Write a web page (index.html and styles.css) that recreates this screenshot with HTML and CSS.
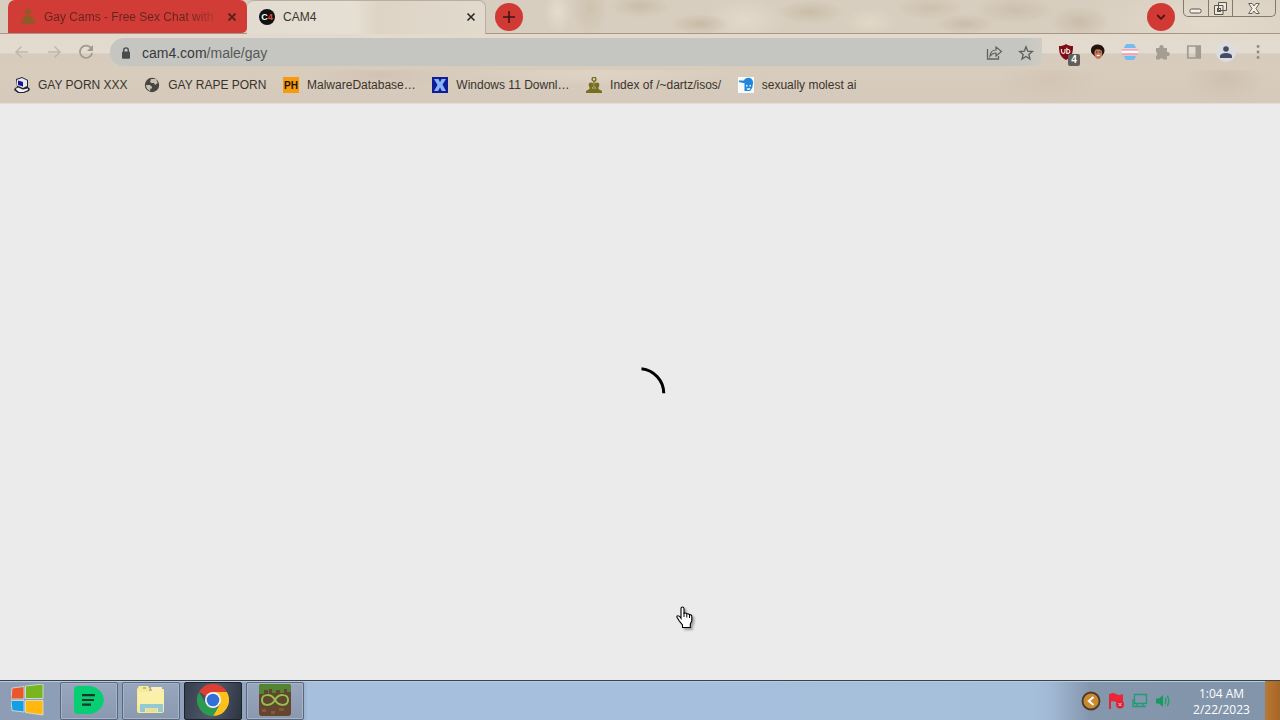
FILE: index.html
```html
<!DOCTYPE html>
<html lang="en">
<head>
  <meta charset="utf-8">
  <title>CAM4</title>
  <link rel="stylesheet" href="styles.css">
</head>
<body>
  <div class="desktop">
    <header class="browser">
      <div class="tabs">
        <div class="tab tab-red">
          <svg class="favicon" width="16" height="18" viewBox="0 0 16 18"><g fill="#8f5a28"><circle cx="8" cy="4" r="3"/><path d="M2 16V11l3-3h6l3 3v5z"/></g></svg>
          <span class="tab-title">Gay Cams - Free Sex Chat with</span>
          <svg class="close" width="10" height="10" viewBox="0 0 10 10"><path d="M1.5 1.5l7 7m0-7l-7 7" stroke="#5c2418" stroke-width="1.8"/></svg>
        </div>
        <div class="tab tab-active">
          <span class="cam-icon">C<b>4</b></span>
          <span class="tab-title">CAM4</span>
          <svg class="close" width="10" height="10" viewBox="0 0 10 10"><path d="M1.5 1.5l7 7m0-7l-7 7" stroke="#2a2825" stroke-width="1.6"/></svg>
        </div>
        <div class="round new-tab">
          <svg width="14" height="14" viewBox="0 0 14 14"><path d="M7 1v12M1 7h12" stroke="#3c1410" stroke-width="1.6"/></svg>
        </div>
        <div class="round tab-search">
          <svg width="10" height="8" viewBox="0 0 10 8"><path d="M1.2 2l3.8 3.8L8.8 2" fill="none" stroke="#4a1512" stroke-width="1.8"/></svg>
        </div>
        <div class="window-buttons">
          <span class="win-min"><svg width="13" height="6" viewBox="0 0 13 6"><rect x="1" y="1" width="11" height="4" rx="1.5" fill="#f4f0e8" stroke="#5b554b"/></svg></span>
          <span class="win-max"><svg width="13" height="13" viewBox="0 0 13 13"><path d="M4.5.5h8v8h-8zM.5 3.5H9v9H.5z" fill="#eee9df" stroke="#5b554b"/><rect x="3.5" y="6.5" width="3" height="3" fill="none" stroke="#5b554b"/></svg></span>
          <span class="win-close"><svg width="12" height="11" viewBox="0 0 12 11"><path d="M.7.5h3.5L6 3 7.800.5h3.500L8 5.500l3.300 5H7.800L6 8l-1.800 2.500H.7L4 5.500z" fill="#f4f0e8" stroke="#5b554b" stroke-width=".9"/></svg></span>
        </div>
      </div>

      <div class="toolbar">
        <div class="nav">
          <svg width="16" height="16" viewBox="0 0 16 16"><path d="M14 8H2m5.500-5.500L2 8l5.500 5.500" fill="none" stroke="#bfb8ac" stroke-width="1.5"/></svg>
          <svg width="16" height="16" viewBox="0 0 16 16"><path d="M2 8h12M8.500 2.500L14 8l-5.500 5.500" fill="none" stroke="#bfb8ac" stroke-width="1.5"/></svg>
          <svg width="16" height="16" viewBox="0 0 16 16"><path d="M13.400 4.500A6.200 6.200 0 1 0 14.200 9" fill="none" stroke="#a09a8e" stroke-width="1.7"/><path d="M15 1v6H9z" fill="#a09a8e"/></svg>
        </div>
        <div class="omnibox">
          <svg width="10" height="12" viewBox="0 0 10 12"><path d="M2.700 5V3.200a2.300 2.300 0 0 1 4.600 0V5" fill="none" stroke="#494b4c" stroke-width="1.4"/><rect x="1" y="4.500" width="8" height="7.200" rx="1" fill="#494b4c"/></svg>
          <span class="url">cam4.com<i>/male/gay</i></span>
          <svg class="share" width="17" height="16" viewBox="0 0 17 16"><path d="M1.500 4v10h11v-3" fill="none" stroke="#62635f" stroke-width="1.3"/><path d="M4 11c.5-4 2.500-6 6-6V2l5.500 4.500L10 11V8C7.500 8 5.800 8.800 4 11z" fill="none" stroke="#62635f" stroke-width="1.2"/></svg>
          <svg width="16" height="16" viewBox="0 0 16 16"><path d="M8 1.800l1.700 4.400 4.700.3-3.600 3 1.200 4.600L8 11.500l-4 2.600 1.200-4.600-3.600-3 4.700-.3z" fill="none" stroke="#5c5e60" stroke-width="1.3"/></svg>
        </div>
        <div class="extensions">
          <div class="ublock">
            <svg width="16" height="16" viewBox="0 0 16 16"><path d="M8 0c2 1.500 4 2 7 2 0 6-.5 10.500-7 14C1.500 12.500 1 8 1 2c3 0 5-.5 7-2z" fill="#800c16"/><path d="M3.500 5v2.500Q3.500 9.300 5.300 9.300T7 7.500V5M8.800 3.700v5.600h1.700a2 2 0 0 0 0-3.800H8.800" fill="none" stroke="#f4e5e2" stroke-width="1.2"/></svg>
            <span class="badge">4</span>
          </div>
          <svg width="16" height="16" viewBox="0 0 16 16"><path d="M1.500 9C0 5 2 1 7 .6c5-.5 9 4 7 8.400L12 12l-7 .5z" fill="#24130f"/><ellipse cx="8.300" cy="9.500" rx="3.900" ry="5.500" fill="#c27a5c"/><path d="M4.300 6.500q2-2.500 8 0L11 3H5z" fill="#24130f"/><path d="M6 8h1.500M9.300 8h1.500" stroke="#34150f"/><path d="M6.300 11q2 2.500 4.200-.3z" fill="#fff"/></svg>
          <svg width="16" height="16" viewBox="0 0 16 16"><path d="M4.500 0h7Q13 1 14 4H2q1-3 2.500-4z" fill="#72bcf0"/><path d="M0 5h16v1.800H0z" fill="#f4a4b8"/><path d="M0 6.800h16v2.400H0z" fill="#fff"/><path d="M0 9.200h16V11H0z" fill="#f2a2b8"/><path d="M2 12h12q-1 3-2.500 4h-7Q3 15 2 12z" fill="#72bcf0"/></svg>
          <svg width="16" height="16" viewBox="0 0 16 16"><path d="M2 4h3.500a2.200 2.200 0 1 1 4 0H13v4a2.100 2.100 0 1 1 0 4v3.500H9.500a2.200 2.200 0 0 0-4 0H2V12a2.200 2.200 0 0 0 0-4z" fill="#a39d94"/></svg>
          <svg width="16" height="16" viewBox="0 0 16 16"><path d="M1.800 2h12.400v12H1.800z" fill="none" stroke="#a19b92" stroke-width="1.7"/><path d="M9.500 2h5v12h-5z" fill="#a19b92"/></svg>
          <div class="profile">
            <svg width="12" height="12" viewBox="0 0 12 12"><circle cx="6" cy="3" r="2.800" fill="#444b68"/><path d="M0 12V9.800Q1 7 6 7t6 2.800V12z" fill="#444b68"/></svg>
          </div>
          <svg width="16" height="16" viewBox="0 0 16 16"><path d="M8 2.500h.1M8 8h.1M8 13.500h.1" stroke="#928b81" stroke-width="2.800" stroke-linecap="round"/></svg>
        </div>
      </div>

      <nav class="bookmarks">
        <div class="bookmark">
          <svg width="16" height="16" viewBox="0 0 16 16"><path d="M2 2l6-2 6 3v7l2 2-1 2-5 2H4l-4-3 1-2 2-1z" fill="#242238"/><path d="M3 2.700L8 1l5 2.500V9l-4 2-6-2.500z" fill="#e8e7ee"/><path d="M4 3.500l5 1.500v4.500L4 8z" fill="#17178c"/><path d="M1.500 12L4 10.500l5 2 5-1v1.500L9.500 15H5z" fill="#f2f0ec"/></svg>
          <span>GAY PORN XXX</span>
        </div>
        <div class="bookmark">
          <svg width="16" height="16" viewBox="0 0 16 16"><circle cx="8" cy="8" r="7.200" fill="#454541"/><path d="M2 8h4l2 2v1.500H6.500L6 14C3.500 13 2 11 2 8zM7 2h5l1.700 4-2.700 2-1-2H7.500L6 5z" fill="#c9c0b0"/></svg>
          <span>GAY RAPE PORN</span>
        </div>
        <div class="bookmark">
          <b class="ph-icon">PH</b>
          <span>MalwareDatabase…</span>
        </div>
        <div class="bookmark">
          <svg width="16" height="16" viewBox="0 0 16 16"><path d="M0 0h16v16H0z" fill="#101c98"/><path d="M2 2h4.500L8 5l1.700-3H14l-3.500 5.500L14 14H9.700L8 10.500 6.200 14H2l3.500-6z" fill="#86b4f6"/></svg>
          <span>Windows 11 Downl…</span>
        </div>
        <div class="bookmark">
          <svg width="16" height="16" viewBox="0 0 16 16"><g fill="#76701e"><circle cx="8" cy="2.200" r="1.900" fill="none" stroke="#76701e" stroke-width="1.4"/><path d="M7.300 4h1.400v9H7.300z"/><circle cx="5" cy="8" r="2.400"/><circle cx="11" cy="8" r="2.400"/><path d="M3.500 9h3v3h3V9h3v3l3.500 2v2H0v-2l3.500-2z"/></g></svg>
          <span>Index of /~dartz/isos/</span>
        </div>
        <div class="bookmark">
          <svg width="16" height="16" viewBox="0 0 16 16"><path d="M0 0h16v16H0z" fill="#f7fafb"/><path d="M1 3.500h5Q7 .8 10.500.8t4.500 4V6l-.8 5-2.200 3H6.500V6H5L1 5z" fill="#2286dc"/><path d="M8 8h1.500v1.500H8zm3.500 0H13v1.500h-1.500zM8.500 11.500l4-.5-1 2h-2z" fill="#e8f6ff"/></svg>
          <span>sexually molest ai</span>
        </div>
      </nav>
    </header>

    <main class="page">
      <svg class="spinner" width="54" height="54" viewBox="0 0 54 54"><path d="M28.500 3.700A25 25 0 0 1 50.800 28.200" fill="none" stroke="#000" stroke-width="3"/></svg>
      <svg class="cursor" width="20" height="26" viewBox="0 0 20 26"><path d="M6 3.500Q6 2 7.400 2T9 3.500v4.800q2-.7 2.700.5 2-.4 2.600.8 2.500-.1 2.500 1.800v4.200L15.300 19v3.500H7.500V20L4 15.500 2 12.200Q1.500 10.700 3 10.700t3 2.600z" fill="#fff" stroke="#000" stroke-width="1.1"/><path d="M9 8v4m2.800-3v3.500m2.700-3V13" stroke="#000" fill="none"/></svg>
    </main>

    <footer class="taskbar">
      <div class="start">
        <svg width="33" height="32" viewBox="0 0 33 32"><g stroke="#dce4e3" stroke-width=".8"><path d="M1 4l12-1.500V15H0z" fill="#e9572b"/><path d="M14.500 2L32 0v14.500H14.500z" fill="#79b51c"/><path d="M0 16.500h13V28L1 26.500z" fill="#169ee5"/><path d="M14.500 16.500H32V31l-17.500-2.500z" fill="#ffb80b"/></g></svg>
      </div>
      <div class="task">
        <svg width="30" height="28" viewBox="0 0 30 28"><path d="M4 0h13q12 3 13 14-1 11-13 14H4q-4 0-4-4V4q0-4 4-4z" fill="#08ce73"/><path d="M8 9.200h13M8 14h12M8 18.700h9" stroke="#13372b" stroke-width="2.2"/></svg>
      </div>
      <div class="task">
        <svg width="30" height="28" viewBox="0 0 30 28"><path d="M1 3l2-3h9l2 3h14v23l-2 1H2L1 25z" fill="#f5e99a"/><path d="M2 6h26v14H2z" fill="#fbf0a9"/><path d="M15 1h11v5H15z" fill="#f8efba"/><path d="M4 18h23v8h-5v-4H9v4H4z" fill="#91cbd1"/><path d="M10 22h11v4H10z" fill="#e6df9b"/><path d="M7 2h3m3 2h3" stroke="#958c55"/></svg>
      </div>
      <div class="task task-open">
        <svg width="32" height="32" viewBox="0 0 32 32"><path d="M16 16L2.140 8A16 16 0 0 1 29.860 8z" fill="#dd4033"/><path d="M16 16V8h13.860A16 16 0 0 1 16 32l7-12z" fill="#fbc21b"/><path d="M16 32A16 16 0 0 1 2.140 8L9 20l7 4h4.600z" fill="#2d9b4f"/><circle cx="16" cy="16" r="8" fill="#f4f6f6"/><circle cx="16" cy="16" r="6.300" fill="#326fd9"/></svg>
      </div>
      <div class="task">
        <svg width="32" height="32" viewBox="0 0 32 32"><rect width="32" height="32" rx="3" fill="#65452f"/><path d="M0 3q0-3 3-3h26q3 0 3 3v5h-4V5h-3v4h-4V6h-4v3h-4V5h-3v4H9V6H5v4H0z" fill="#528432"/><path d="M3 25h4v3H3zm17-1h5v3h-5zm-8 3h4v3h-4z" fill="#805a3d"/><path d="M16 16c-4-7-13-6-13 0s9 7 13 0c4-7 13-6 13 0s-9 7-13 0z" fill="none" stroke="#445225" stroke-width="4"/><path d="M16 16c-4-7-13-6-13 0s9 7 13 0c4-7 13-6 13 0s-9 7-13 0z" fill="none" stroke="#a5b455" stroke-width="2"/></svg>
      </div>
      <div class="tray">
        <svg width="20" height="20" viewBox="0 0 20 20"><circle cx="10" cy="10" r="8.500" fill="#c88931" stroke="#4c3a28" stroke-width="1.800"/><path d="M12.500 6L7.800 10l4.700 4" fill="none" stroke="#fff" stroke-width="2"/></svg>
        <svg width="17" height="18" viewBox="0 0 17 18"><path d="M2 2v15" stroke="#da2937" stroke-width="2"/><path d="M2 2q3-2 6 0t7 0v8q-4 1.500-7 0t-6 0z" fill="#ed2637"/><circle cx="12" cy="12.500" r="4" fill="#df2336"/><path d="M10.500 11l3 3m0-3l-3 3" stroke="#f4c9d0"/></svg>
        <svg width="16" height="15" viewBox="0 0 16 15"><path d="M2.500 1.500h12v9h-12zM1 6v7.500h13M5 10.500v3m6-3v3" fill="none" stroke="#229b74" stroke-width="1.3"/></svg>
        <svg width="16" height="14" viewBox="0 0 16 14"><path d="M1 4.500h3L8 1v12L4 9.500H1z" fill="#139c5c"/><path d="M10 4q2 3 0 6m2.200-8q3.500 5 0 10" fill="none" stroke="#229f6c" stroke-width="1.4"/></svg>
      </div>
      <div class="clock">1:04 AM<br>2/22/2023</div>
      <div class="show-desktop"></div>
    </footer>
  </div>
</body>
</html>
```

FILE: styles.css
```css
* {
  box-sizing: border-box;
}

body {
  margin: 0;
  font-family: "Liberation Sans", Arial, sans-serif;
  font-size: 12px;
  color: #3a342d;
}

svg {
  display: block;
  flex-shrink: 0;
}

.desktop {
  display: flex;
  flex-direction: column;
  width: 1280px;
  height: 720px;
  overflow: hidden;
}

.browser {
  height: 104px;
  background: #d8ccbd;
  border-bottom: 1px solid #e2dcd3;
}

/* tab strip */
.tabs {
  display: flex;
  height: 34px;
  padding-left: 8px;
  border-bottom: 1px solid #a59889;
  background:
    radial-gradient(ellipse 14px 22px at 558px 12px, #e6dccd, transparent),
    radial-gradient(ellipse 18px 30px at 590px 8px, #c9bba6aa, transparent),
    radial-gradient(ellipse 30px 12px at 640px 6px, #c3b49caa, transparent),
    radial-gradient(ellipse 30px 10px at 700px 24px, #c0b098aa, transparent),
    radial-gradient(ellipse 40px 22px at 745px 20px, #e2d9cb, transparent),
    radial-gradient(ellipse 34px 12px at 810px 12px, #c3b59eaa, transparent),
    radial-gradient(ellipse 26px 14px at 870px 22px, #e2d8c8, transparent),
    radial-gradient(ellipse 34px 12px at 930px 8px, #c8b9a3aa, transparent),
    radial-gradient(ellipse 30px 10px at 965px 24px, #c3b49eaa, transparent),
    radial-gradient(ellipse 40px 14px at 1015px 10px, #c6b8a3aa, transparent),
    radial-gradient(ellipse 30px 16px at 1080px 22px, #c3b39daa, transparent),
    radial-gradient(ellipse 130px 50px at 1210px 24px, #e3dacb, transparent),
    #d8cebf;
}

.tab {
  display: flex;
  align-items: center;
  white-space: nowrap;
}

.tab-red {
  width: 239px;
  height: 33px;
  padding-left: 12px;
  background: #d23c37;
  border-radius: 7px 7px 5px 0;
}

.tab-red .tab-title {
  width: 170px;
  margin-left: 8px;
  overflow: hidden;
  background: linear-gradient(90deg, #65251c 85%, #b5352f);
  -webkit-background-clip: text;
  background-clip: text;
  color: transparent;
}

.tab-red .close {
  margin-left: 13px;
}

.tab-active {
  width: 239px;
  height: 34px;
  padding: 0 9px 1px 12px;
  background: linear-gradient(90deg, #e2dcd0, #e6dfd3 45%, #ddd4c6 55%, #e2dacd);
  border: 1px solid #b9ae9f;
  border-width: 1px 1px 0 0;
  border-radius: 7px 7px 0 0;
}

.tab-active .tab-title {
  margin-left: 8px;
}

.tab-active .close {
  margin-left: auto;
}

.cam-icon {
  width: 16px;
  height: 16px;
  border-radius: 50%;
  background: #111;
  color: #fff;
  font: bold 9px/16px "Liberation Sans", Arial, sans-serif;
  text-align: center;
}

.cam-icon b {
  color: #e44b3d;
}

.round {
  display: flex;
  align-items: center;
  justify-content: center;
  width: 28px;
  height: 28px;
  margin-top: 3px;
  border-radius: 50%;
  background: #d13934;
}

.new-tab {
  margin-left: 9px;
}

.tab-search {
  margin-left: auto;
}

.window-buttons {
  display: flex;
  width: 93px;
  height: 17px;
  margin: 0 4px 0 8px;
  border: 1px solid #83796c;
  border-top: 0;
  border-radius: 0 0 5px 5px;
}

.window-buttons span {
  display: flex;
  align-items: center;
  justify-content: center;
  width: 25px;
  border-right: 1px solid #83796c;
}

.window-buttons .win-min {
  padding-top: 5px;
}

.window-buttons .win-close {
  width: 42px;
  border: 0;
}

/* address row */
.toolbar {
  display: flex;
  align-items: center;
  height: 36px;
  background: linear-gradient(#e3dacd 0, #e2dbcf 19px, #d6cbbc 20px, #d8ccbd 100%);
}

.nav {
  display: flex;
  gap: 16px;
  width: 110px;
  padding-left: 14px;
}

.omnibox {
  display: flex;
  align-items: center;
  width: 932px;
  height: 28px;
  padding: 2px 8px 0 11px;
  border-radius: 14px 0 0 14px;
  background: linear-gradient(90deg, #c5c6c1 98%, #cfccc3);
}

.url {
  margin-left: 11px;
  font-size: 14px;
  color: #383b3d;
}

.url i {
  font-style: normal;
  color: #565959;
}

.share {
  margin-left: auto;
  margin-right: 15px;
}

.extensions {
  display: flex;
  align-items: center;
  gap: 16px;
  padding-left: 16px;
}

.ublock {
  position: relative;
}

.badge {
  position: absolute;
  left: 10px;
  top: 10px;
  width: 12px;
  height: 12px;
  border-radius: 2px;
  background: #5f605c;
  color: #fff;
  font: bold 10px/12px "Liberation Sans", Arial, sans-serif;
  text-align: center;
}

.profile {
  display: flex;
  align-items: center;
  justify-content: center;
  width: 20px;
  height: 20px;
  margin: 0 -2px;
  border-radius: 50%;
  background: #dddde0;
}

/* bookmarks row */
.bookmarks {
  display: flex;
  gap: 16.6px;
  height: 33px;
  padding: 0 14px 3px;
  background:
    radial-gradient(ellipse 70px 14px at 380px 5px, #cbbcaa88, transparent),
    radial-gradient(ellipse 130px 12px at 600px 4px, #ded4c6, transparent),
    radial-gradient(ellipse 50px 22px at 1050px 10px, #cdbfae88, transparent),
    radial-gradient(ellipse 40px 26px at 1225px 8px, #c8b8a688, transparent),
    linear-gradient(#d8ccbd, #d5c9bb);
}

.bookmark {
  display: flex;
  align-items: center;
  gap: 8px;
  white-space: nowrap;
}

.ph-icon {
  width: 16px;
  height: 16px;
  background: #f79b0c;
  color: #1c1406;
  font-size: 10px;
  line-height: 17px;
  text-align: center;
}

/* loading page */
.page {
  position: relative;
  display: flex;
  align-items: center;
  justify-content: center;
  height: 576px;
  background: #ebebeb;
}

.spinner {
  margin-right: 1px;
}

.cursor {
  position: absolute;
  left: 675px;
  top: 501px;
  filter: drop-shadow(2px 2px 1px #0005);
}

/* taskbar */
.taskbar {
  display: flex;
  height: 40px;
  border-top: 1px solid #36424f;
  background: linear-gradient(90deg, #8c9db5 0, #93a5bf 300px, #a5bfdd 308px, #a5bfdb 1030px, #a2b9d5 1050px, #8597ad 1090px, #8194aa);
  box-shadow: inset 0 1px #bccada;
}

.start {
  width: 60px;
  padding: 3px 0 0 11px;
}

.task {
  display: flex;
  align-items: center;
  justify-content: center;
  width: 58px;
  height: 38px;
  margin: 1px 4px 0 0;
  padding-right: 1px;
  border: 1px solid #5b687c;
  border-radius: 2px;
  background: linear-gradient(#98a7bd, #8a99b0);
  box-shadow: inset 0 0 0 1px #a6b4c7;
}

.task svg {
  margin-bottom: 2px;
}

.task-open {
  background: linear-gradient(100deg, #353e4e, #515b6c 50%, #2d3441);
  border-color: #1c222d;
  box-shadow: none;
}

.tray {
  display: flex;
  align-items: center;
  gap: 7px;
  margin-left: auto;
}

.clock {
  width: 94px;
  padding: 5px 0 0 7px;
  color: #fff;
  font: 400 12px/16px "Open Sans", sans-serif;
  text-align: center;
}

.show-desktop {
  width: 15px;
  background: linear-gradient(90deg, #b17a3d, #b3712c 40%, #a5662a);
}
```
